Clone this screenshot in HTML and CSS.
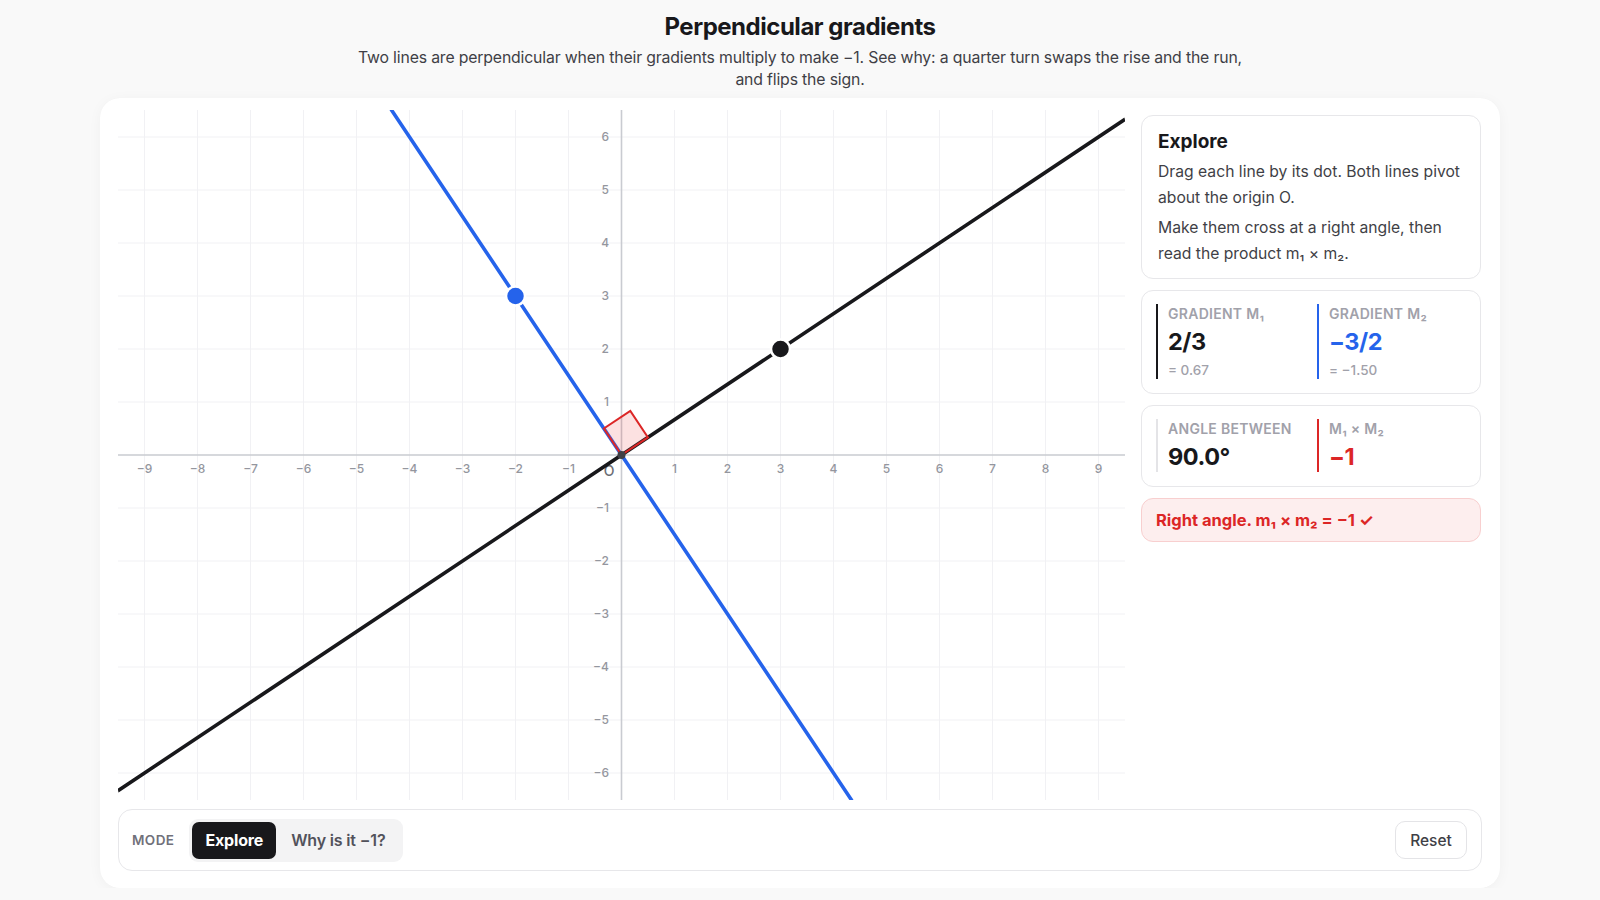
FILE: index.html
```html
<!DOCTYPE html>
<html lang="en">
<head>
<meta charset="utf-8">
<title>Perpendicular gradients</title>
<link rel="stylesheet" href="styles.css">
</head>
<body>
<header class="page-head">
  <h1 class="title">Perpendicular gradients</h1>
  <p class="subtitle">Two lines are perpendicular when their gradients multiply to make −1. See why: a quarter turn swaps the rise and the run, and flips the sign.</p>
</header>
<main class="card">
  <div class="main-row">
    <div class="plot">
      <svg class="plot-svg" width="1007" height="690" viewBox="0 0 1007 690" xmlns="http://www.w3.org/2000/svg">
        <rect x="0" y="0" width="1007" height="690" fill="#ffffff"/>
        <g class="grid" stroke="#f1f1f4" stroke-width="1">
          <line x1="26.5" y1="0" x2="26.5" y2="690"/>
          <line x1="79.5" y1="0" x2="79.5" y2="690"/>
          <line x1="132.5" y1="0" x2="132.5" y2="690"/>
          <line x1="185.5" y1="0" x2="185.5" y2="690"/>
          <line x1="238.5" y1="0" x2="238.5" y2="690"/>
          <line x1="291.5" y1="0" x2="291.5" y2="690"/>
          <line x1="344.5" y1="0" x2="344.5" y2="690"/>
          <line x1="397.5" y1="0" x2="397.5" y2="690"/>
          <line x1="450.5" y1="0" x2="450.5" y2="690"/>
          <line x1="556.5" y1="0" x2="556.5" y2="690"/>
          <line x1="609.5" y1="0" x2="609.5" y2="690"/>
          <line x1="662.5" y1="0" x2="662.5" y2="690"/>
          <line x1="715.5" y1="0" x2="715.5" y2="690"/>
          <line x1="768.5" y1="0" x2="768.5" y2="690"/>
          <line x1="821.5" y1="0" x2="821.5" y2="690"/>
          <line x1="874.5" y1="0" x2="874.5" y2="690"/>
          <line x1="927.5" y1="0" x2="927.5" y2="690"/>
          <line x1="980.5" y1="0" x2="980.5" y2="690"/>
          <line x1="0" y1="27" x2="1007" y2="27"/>
          <line x1="0" y1="80" x2="1007" y2="80"/>
          <line x1="0" y1="133" x2="1007" y2="133"/>
          <line x1="0" y1="186" x2="1007" y2="186"/>
          <line x1="0" y1="239" x2="1007" y2="239"/>
          <line x1="0" y1="292" x2="1007" y2="292"/>
          <line x1="0" y1="398" x2="1007" y2="398"/>
          <line x1="0" y1="451" x2="1007" y2="451"/>
          <line x1="0" y1="504" x2="1007" y2="504"/>
          <line x1="0" y1="557" x2="1007" y2="557"/>
          <line x1="0" y1="610" x2="1007" y2="610"/>
          <line x1="0" y1="663" x2="1007" y2="663"/>
        </g>
        <g class="axes" stroke="#c9cbd1" stroke-width="1.6">
          <line x1="0" y1="345" x2="1007" y2="345"/>
          <line x1="503.5" y1="0" x2="503.5" y2="690"/>
        </g>
        <g class="xlabels" text-anchor="middle">
          <text x="26.5" y="360">−9</text>
          <text x="79.5" y="360">−8</text>
          <text x="132.5" y="360">−7</text>
          <text x="185.5" y="360">−6</text>
          <text x="238.5" y="360">−5</text>
          <text x="291.5" y="360">−4</text>
          <text x="344.5" y="360">−3</text>
          <text x="397.5" y="360">−2</text>
          <text x="450.5" y="360">−1</text>
          <text x="556.5" y="360">1</text>
          <text x="609.5" y="360">2</text>
          <text x="662.5" y="360">3</text>
          <text x="715.5" y="360">4</text>
          <text x="768.5" y="360">5</text>
          <text x="821.5" y="360">6</text>
          <text x="874.5" y="360">7</text>
          <text x="927.5" y="360">8</text>
          <text x="980.5" y="360">9</text>
        </g>
        <g class="ylabels" text-anchor="end">
          <text x="491" y="28">6</text>
          <text x="491" y="81">5</text>
          <text x="491" y="134">4</text>
          <text x="491" y="187">3</text>
          <text x="491" y="240">2</text>
          <text x="491" y="293">1</text>
          <text x="491" y="399">−1</text>
          <text x="491" y="452">−2</text>
          <text x="491" y="505">−3</text>
          <text x="491" y="558">−4</text>
          <text x="491" y="611">−5</text>
          <text x="491" y="664">−6</text>
        </g>
        <text class="origin-label" x="491" y="362" text-anchor="middle">O</text>
        <line x1="0" y1="680.67" x2="1007" y2="9.33" stroke="#18181b" stroke-width="3.6" stroke-linecap="round"/>
        <line x1="273.5" y1="0" x2="733.5" y2="690" stroke="#2563eb" stroke-width="3.6" stroke-linecap="round"/>
        <polygon points="503.5,345 529.96,327.36 512.32,300.9 485.86,318.54" fill="rgba(239,68,68,0.16)" stroke="#dc2626" stroke-width="2" stroke-linejoin="miter"/>
        <circle cx="503.5" cy="345" r="4" fill="#3f3f46"/>
        <circle cx="662.5" cy="239" r="9.5" fill="#18181b" stroke="#ffffff" stroke-width="2.5"/>
        <circle cx="397.5" cy="186" r="9.5" fill="#2563eb" stroke="#ffffff" stroke-width="2.5"/>
      </svg>
    </div>
    <aside class="panel">
      <section class="box explore">
        <h2 class="box-title">Explore</h2>
        <p class="box-text">Drag each line by its dot. Both lines pivot about the origin O.</p>
        <p class="box-text">Make them cross at a right angle, then read the product m₁ × m₂.</p>
      </section>
      <section class="box stats">
        <div class="stat stat-black">
          <div class="stat-label">Gradient m₁</div>
          <div class="stat-value">2/3</div>
          <div class="stat-sub">= 0.67</div>
        </div>
        <div class="stat stat-blue">
          <div class="stat-label">Gradient m₂</div>
          <div class="stat-value value-blue">−3/2</div>
          <div class="stat-sub">= −1.50</div>
        </div>
      </section>
      <section class="box stats">
        <div class="stat stat-grey">
          <div class="stat-label">Angle between</div>
          <div class="stat-value">90.0°</div>
        </div>
        <div class="stat stat-red">
          <div class="stat-label">m₁ × m₂</div>
          <div class="stat-value value-red">−1</div>
        </div>
      </section>
      <div class="status">Right angle. m₁ × m₂ = −1 ✓</div>
    </aside>
  </div>
  <div class="toolbar">
    <span class="mode-label">Mode</span>
    <div class="segmented">
      <button class="seg-btn active" type="button">Explore</button>
      <button class="seg-btn" type="button">Why is it −1?</button>
    </div>
    <button class="reset" type="button">Reset</button>
  </div>
</main>
</body>
</html>
```
FILE: styles.css
```css
* { box-sizing: border-box; }

body {
  margin: 0;
  background: #f9f9f9;
  font-family: Inter, "Noto Sans", "DejaVu Sans", sans-serif;
  color: #18181b;
}

.page-head {
  padding-top: 12px;
  text-align: center;
}

.title {
  margin: 0;
  font-size: 24px;
  line-height: 30px;
  font-weight: 700;
  color: #18181b;
  letter-spacing: -0.02em;
}

.subtitle {
  margin: 5px auto 0;
  max-width: 900px;
  font-size: 15.8px;
  line-height: 21.5px;
  color: #3f3f46;
  letter-spacing: -0.01em;
}

.card {
  display: block;
  width: 1400px;
  margin: 8px auto 0;
  background: #ffffff;
  border-radius: 20px;
  padding: 12px 18px 17px;
  box-shadow: 0 2px 14px rgba(0, 0, 0, 0.04), 0 0 1px rgba(0, 0, 0, 0.03);
}

.main-row {
  display: flex;
  gap: 16px;
  align-items: flex-start;
}

.plot {
  width: 1007px;
  height: 690px;
  border-radius: 10px;
  overflow: hidden;
  flex: none;
}

.plot-svg { display: block; }

.xlabels text, .ylabels text {
  font-family: Inter, "Noto Sans", sans-serif;
  font-size: 12px;
  font-weight: 500;
  fill: #94969e;
  dominant-baseline: middle;
}

.origin-label {
  font-family: Inter, "Noto Sans", sans-serif;
  font-size: 14px;
  font-weight: 500;
  fill: #6b6e76;
  dominant-baseline: middle;
}

.panel {
  width: 340px;
  flex: none;
  padding-top: 5px;
  display: flex;
  flex-direction: column;
  gap: 11px;
}

.box {
  border: 1px solid #e7e7ea;
  border-radius: 12px;
  background: #ffffff;
}

.explore {
  padding: 14px 12px 12px 16px;
}

.box-title {
  margin: 0 0 5px;
  font-size: 19px;
  line-height: 24px;
  font-weight: 700;
  color: #18181b;
}

.box-text {
  margin: 0;
  font-size: 15.7px;
  line-height: 25.5px;
  color: #3f3f46;
}

.box-text + .box-text { margin-top: 5px; }

.stats {
  padding: 13px 14px 14px;
  display: grid;
  grid-template-columns: 1fr 1fr;
  column-gap: 12px;
}

.stat {
  border-left: 2px solid #18181b;
  padding-left: 10px;
}

.stat-black { border-left-color: #18181b; }
.stat-blue { border-left-color: #2563eb; }
.stat-grey { border-left-color: #e4e4e7; }
.stat-red { border-left-color: #dc2626; }

.stat-label {
  font-size: 14px;
  line-height: 19px;
  font-weight: 600;
  text-transform: uppercase;
  letter-spacing: 0.02em;
  color: #a1a1aa;
}

.stat-value {
  margin-top: 4px;
  font-size: 23.5px;
  line-height: 30px;
  font-weight: 700;
  color: #18181b;
  letter-spacing: -0.02em;
}

.value-blue { color: #2563eb; }
.value-red { color: #dc2626; }

.stat-sub {
  margin-top: 4px;
  font-size: 13.5px;
  line-height: 18px;
  font-weight: 500;
  color: #a1a1aa;
}

.status {
  border: 1px solid #f8cfcf;
  background: #fdeeee;
  border-radius: 12px;
  padding: 11px 14px;
  font-size: 16.5px;
  line-height: 20px;
  font-weight: 700;
  color: #dc2626;
}

.toolbar {
  margin-top: 9px;
  height: 62px;
  border: 1px solid #e7e7ea;
  border-radius: 14px;
  padding: 0 14px 0 13px;
  display: flex;
  align-items: center;
  gap: 15px;
}

.mode-label {
  font-size: 13.5px;
  font-weight: 600;
  text-transform: uppercase;
  letter-spacing: 0.03em;
  color: #71717a;
}

.segmented {
  display: flex;
  background: #f3f3f4;
  border-radius: 9px;
  padding: 3px;
}

.seg-btn {
  height: 37px;
  border: none;
  background: transparent;
  border-radius: 7px;
  padding: 0 15px;
  font-family: Inter, "Noto Sans", sans-serif;
  font-size: 16px;
  font-weight: 600;
  letter-spacing: -0.01em;
  color: #52525b;
}

.seg-btn.active {
  background: #18181b;
  color: #ffffff;
  font-weight: 700;
  padding: 0 13px;
}

.reset {
  margin-left: auto;
  height: 38px;
  width: 72px;
  border: 1px solid #e4e4e7;
  border-radius: 10px;
  background: #ffffff;
  font-family: Inter, "Noto Sans", sans-serif;
  font-size: 15.5px;
  font-weight: 500;
  color: #3f3f46;
}
```
